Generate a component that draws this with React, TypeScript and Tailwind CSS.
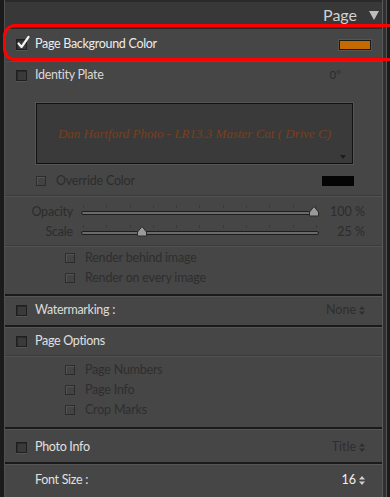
import React from "react";

const font = { fontFamily: "Lato, 'Open Sans', sans-serif" };

function Box({ checked = false, dim = false }: { checked?: boolean; dim?: boolean }) {
  if (dim) {
    return (
      <div className="relative w-[10px] h-[10px] border border-[#2c2c2c] bg-[#434343] shadow-[inset_1px_1px_0_#555]" />
    );
  }
  return (
    <div className="relative w-[11px] h-[11px] border border-[#1f1f1f] bg-[#3a3a3a] shadow-[inset_1px_1px_0_#2a2a2a,0_1px_0_#555]">
      {checked && (
        <svg className="absolute left-[-1px] top-[-5px]" width="15" height="15" viewBox="0 0 15 15">
          <path d="M2.5 8.5 L5.5 12 L12.5 2" fill="none" stroke="#f2f2f2" strokeWidth="2.2" strokeLinecap="round" strokeLinejoin="round" />
        </svg>
      )}
    </div>
  );
}

function Updown({ color = "#2f2f2f" }: { color?: string }) {
  return (
    <svg width="6" height="9" viewBox="0 0 6 9" className="ml-[3px]">
      <path d="M0 3.5 L3 0 L6 3.5 Z M0 5.5 L3 9 L6 5.5 Z" fill={color} />
    </svg>
  );
}

function LightSep() {
  return <div className="h-[2px] border-t border-[#3b3b3b] border-b border-b-[#525252]" />;
}

function DarkSep() {
  return <div className="h-[3px] bg-[#1a1a1a] border-b border-b-[#555]" />;
}

function Slider({ label, pos, value }: { label: string; pos: number; value: string }) {
  return (
    <div className="h-[20px] flex items-center">
      <div className="w-[68px] text-right text-[12.5px] tracking-[-0.2px] text-[#2c2c2c]">{label}</div>
      <div className="relative ml-[8px] w-[238px] h-[20px]">
        <div className="absolute left-0 right-0 top-[3px] flex justify-between px-[2px]">
          {Array.from({ length: 11 }).map((_, i) => (
            <div key={i} className="w-px h-[3px] bg-[#3a3a3a]" />
          ))}
        </div>
        <div className="absolute left-0 right-0 top-[9px] h-[4px] rounded-[2px] border border-[#1e1e1e] bg-[#6a6a6a]" />
        <svg className="absolute top-[4px]" style={{ left: pos - 5 }} width="10" height="11" viewBox="0 0 10 11">
          <path d="M5 0.5 L9.5 6 L9.5 10 L0.5 10 L0.5 6 Z" fill="#9a9a9a" stroke="#2a2a2a" strokeWidth="1" />
        </svg>
      </div>
      <div className="ml-auto mr-[17px] text-[12.5px] text-[#2c2c2c]">{value}</div>
    </div>
  );
}

function SubCheck({ label, h = 20 }: { label: string; h?: number }) {
  return (
    <div className="flex items-center pl-[60px]" style={{ height: h }}>
      <Box dim />
      <span className="ml-[10px] text-[12.5px] tracking-[-0.2px] text-[#2e2e2e]">{label}</span>
    </div>
  );
}

const label = "ml-[8px] text-[12.5px] tracking-[-0.3px]";

export default function App() {
  return (
    <div className="relative w-[390px] h-[497px] bg-[#1b1b1b] overflow-hidden" style={font}>
      <div className="flex h-full">
        <div className="w-[4px] bg-[#1b1b1b]" />
        <div className="w-px bg-[#505050]" />
        <div className="flex-1 flex flex-col bg-[#464646]">
          {/* header */}
          <div className="h-[28px] bg-[#383838] flex items-end justify-end pb-[2px] pr-[3px] border-t-2 border-[#2a2a2a]">
            <span className="text-[16px] text-[#d0d0d0] leading-none mb-[3px]">Page</span>
            <svg width="10" height="9" viewBox="0 0 10 9" className="ml-[12px] mb-[6px]">
              <path d="M0 0 L10 0 L5 9 Z" fill="#bdbdbd" />
            </svg>
          </div>
          <div className="h-px bg-[#2a2a2a]" />
          {/* Page background color */}
          <div className="h-[31px] flex items-center pl-[11px] pr-[11px]">
            <Box checked />
            <span className={`${label} text-[#ececec]`}>Page Background Color</span>
            <div className="ml-auto w-[32px] h-[10px] border border-[#1a1a1a] bg-[#c46a00] shadow-[0_0_0_1px_#555]" />
          </div>
          <LightSep />
          {/* Identity plate */}
          <div className="h-[26px] flex items-center pl-[11px] pr-[41px]">
            <Box />
            <span className={`${label} text-[#d8d8d8]`}>Identity Plate</span>
            <span className="ml-auto text-[11.5px] text-[#2c2c2c]">0°</span>
          </div>
          <div className="pt-[15px] pl-[31px]">
            <div className="relative w-[317px] h-[61px] border border-[#111] bg-[#3a3a3a] flex items-center justify-center shadow-[0_0_0_1px_#555]">
              <span
                className="text-[13px] italic text-[#7c3f1a]"
                style={{ fontFamily: "'Liberation Serif', serif" }}
              >
                Dan Hartford Photo - LR13.3 Master Cat ( Drive C)
              </span>
              <svg className="absolute right-[6px] bottom-[4px]" width="6" height="4" viewBox="0 0 6 4">
                <path d="M0 0 L6 0 L3 4 Z" fill="#1e1e1e" />
              </svg>
            </div>
          </div>
          {/* Override color */}
          <div className="h-[28px] flex items-center pl-[31px] pr-[28px] pt-[6px]">
            <Box dim />
            <span className="ml-[10px] text-[12.5px] tracking-[-0.2px] text-[#2c2c2c]">Override Color</span>
            <div className="ml-auto w-[32px] h-[10px] bg-[#050505]" />
          </div>
          <div className="h-[3px]" />
          <LightSep />
          <div className="h-[5px]" />
          <Slider label="Opacity" pos={233} value="100 %" />
          <Slider label="Scale" pos={61} value="25 %" />
          <div className="h-[3px]" />
          <LightSep />
          <div className="h-[1px]" />
          <SubCheck label="Render behind image" />
          <SubCheck label="Render on every image" />
          <div className="h-[6px]" />
          <DarkSep />
          {/* Watermarking */}
          <div className="h-[28px] flex items-center pl-[11px] pr-[17px] pb-[1px]">
            <Box />
            <span className={`${label} text-[#dcdcdc]`}>Watermarking :</span>
            <span className="ml-auto text-[12.5px] text-[#2e2e2e]">None</span>
            <Updown />
          </div>
          <DarkSep />
          {/* Page options */}
          <div className="h-[27px] flex items-center pl-[11px]">
            <Box />
            <span className={`${label} text-[#e0e0e0]`}>Page Options</span>
          </div>
          <LightSep />
          <div className="h-[3px]" />
          <SubCheck label="Page Numbers" h={20} />
          <SubCheck label="Page Info" h={20} />
          <SubCheck label="Crop Marks" h={20} />
          <div className="h-[7px]" />
          <DarkSep />
          {/* Photo info */}
          <div className="h-[32px] flex items-center pl-[11px] pr-[17px] pt-[2px]">
            <Box />
            <span className={`${label} text-[#e0e0e0]`}>Photo Info</span>
            <span className="ml-auto text-[12.5px] text-[#2e2e2e]">Title</span>
            <Updown />
          </div>
          <DarkSep />
          {/* Font size */}
          <div className="flex-1 flex items-center pl-[30px] pr-[17px] pb-[2px]">
            <span className="text-[12.5px] tracking-[-0.3px] text-[#e0e0e0]">Font Size :</span>
            <span className="ml-auto text-[12.5px] text-[#f0f0f0]">16</span>
            <Updown color="#d0d0d0" />
          </div>
        </div>
        <div className="w-px bg-[#5a5a5a]" />
        <div className="w-[3px] bg-[#303030]" />
        <div className="w-px bg-[#555]" />
        <div className="w-[3px] bg-[#1b1b1b]" />
      </div>
      {/* red annotation */}
      <div className="absolute left-[3px] right-[-12px] top-[24px] h-[37px] rounded-[12px] border-[3px] border-[#ff0000] pointer-events-none" />
    </div>
  );
}
